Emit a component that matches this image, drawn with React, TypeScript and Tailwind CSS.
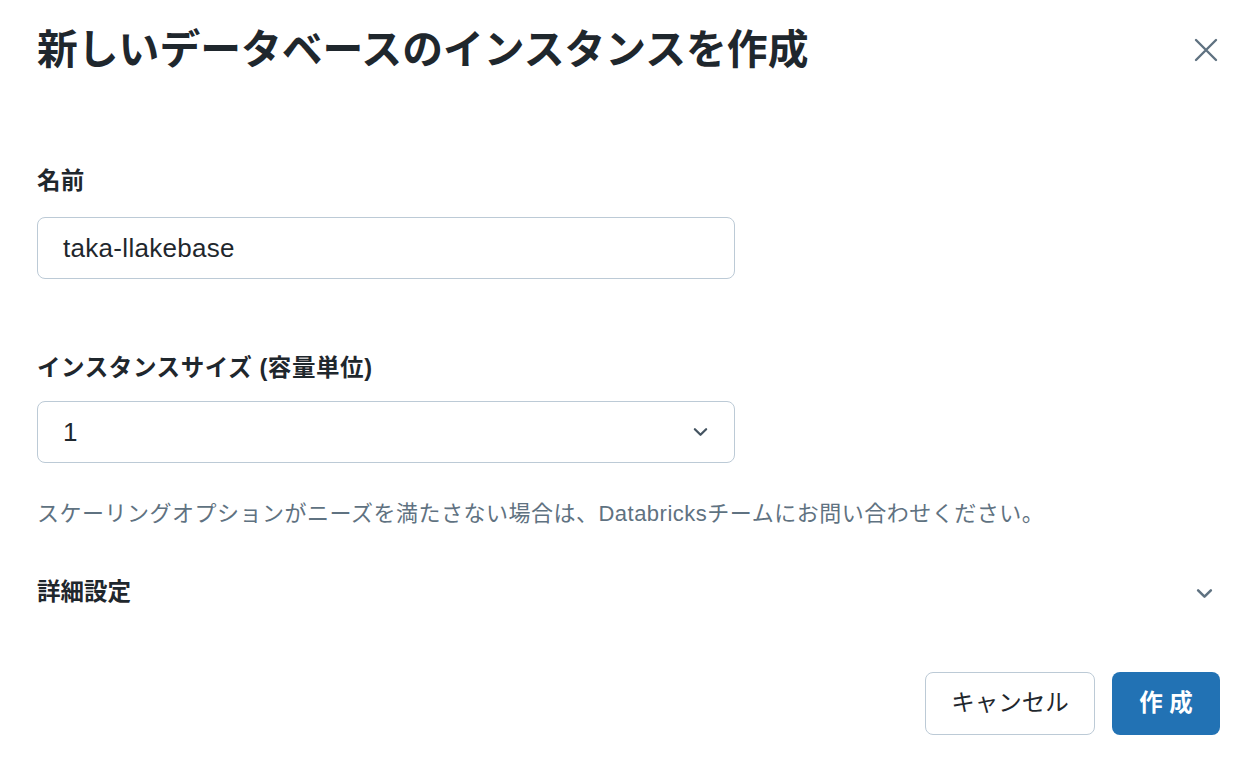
import React from "react";

const font = { fontFamily: '"Liberation Sans","Noto Sans CJK JP",sans-serif' };

function Chevron({ className }: { className?: string }) {
  return (
    <svg className={className} viewBox="0 0 16 10" fill="none" stroke="currentColor" strokeWidth="2.4" strokeLinecap="round" strokeLinejoin="round">
      <path d="M2 2l6 6 6-6" />
    </svg>
  );
}

export default function App() {
  return (
    <div className="w-[1258px] h-[784px] bg-white text-[#1f272d] flex flex-col pl-[37px] pr-[38px] pt-[24px]" style={font}>
      <div className="flex items-center justify-between">
        <h1 className="text-[40.8px] leading-[52px] font-bold text-[#1f272d]">新しいデータベースのインスタンスを作成</h1>
        <button className="w-[34px] h-[34px] flex items-center justify-center text-[#5f7281] mr-[-3px]">
          <svg viewBox="0 0 24 24" className="w-[24px] h-[24px]" fill="none" stroke="currentColor" strokeWidth="2.4" strokeLinecap="round">
            <path d="M2 2l20 20M22 2L2 22" />
          </svg>
        </button>
      </div>

      <label className="mt-[89px] text-[23.5px] leading-[32px] font-bold tracking-[0.2px]">名前</label>
      <div className="mt-[20px] w-[698px] h-[62px] rounded-[8px] border-[1.5px] border-[#bccad6] flex items-center pl-[25px] text-[26px] tracking-[0.3px]">
        taka-llakebase
      </div>

      <label className="mt-[73px] text-[23.5px] leading-[32px] font-bold tracking-[0.6px]">インスタンスサイズ (容量単位)</label>
      <div className="mt-[17px] w-[698px] h-[62px] rounded-[8px] border-[1.5px] border-[#bccad6] flex items-center justify-between pl-[25px] pr-[26px] text-[26px]">
        <span>1</span>
        <Chevron className="w-[15px] h-[10px] text-[#445461]" />
      </div>

      <p className="mt-[36px] text-[22px] leading-[30px] text-[#5f7281] tracking-[0.5px]">
        スケーリングオプションがニーズを満たさない場合は、Databricksチームにお問い合わせください。
      </p>

      <div className="mt-[48px] flex items-center justify-between h-[32px]">
        <span className="text-[23.5px] font-semibold">詳細設定</span>
        <Chevron className="w-[17px] h-[11px] text-[#5f7281] mr-[7px]" />
      </div>

      <div className="mt-[63px] flex justify-end gap-[17px]">
        <button className="w-[170px] h-[63px] rounded-[8px] border-[1.5px] border-[#bccad6] bg-white text-[23.5px] text-[#1f272d]">
          キャンセル
        </button>
        <button className="w-[108px] h-[63px] rounded-[8px] bg-[#2272b4] text-white text-[23.5px] font-bold">
          作 成
        </button>
      </div>
    </div>
  );
}
